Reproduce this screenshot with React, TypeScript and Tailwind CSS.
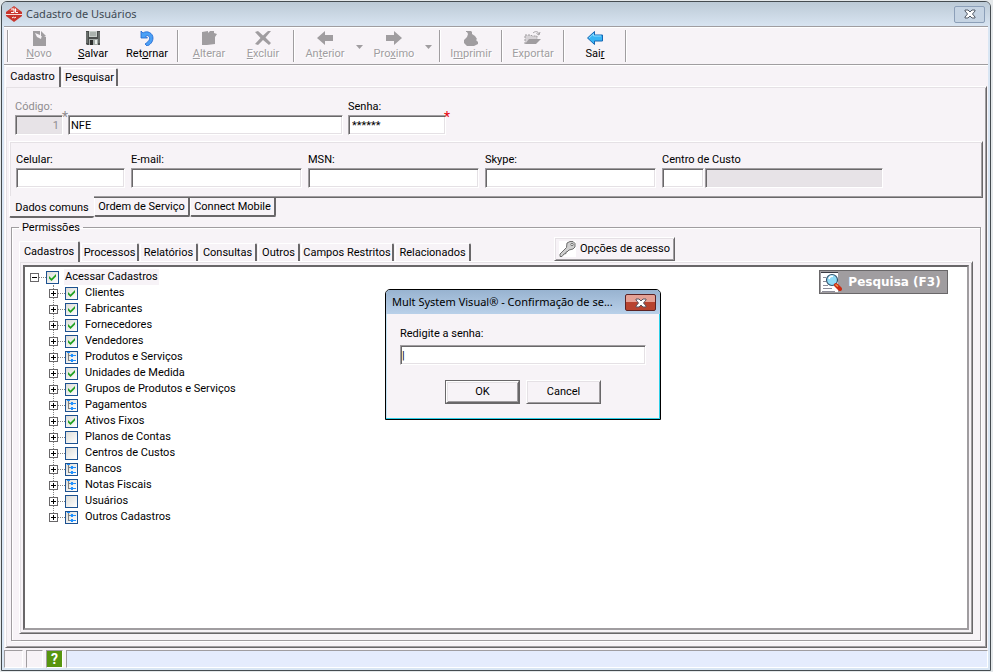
import type { ReactNode } from 'react';
import clsx from 'clsx';

type TreeState = 'on' | 'off' | 'partial';

const sunken =
  'border border-t-[#a09da0] border-l-[#a09da0] border-r-white border-b-white shadow-[inset_1px_1px_0_#696769,inset_-1px_-1px_0_#e5e1e5]';
const raised =
  'border border-t-white border-l-white border-r-[#696769] border-b-[#696769] shadow-[inset_1px_1px_0_#e5e1e5,inset_-1px_-1px_0_#a09da0]';
const statusCell = 'border border-t-[#a09da0] border-r-white border-b-white border-l-[#a09da0]';

const permissionTabs = [
  { label: 'Processos', width: 'w-[58px]' },
  { label: 'Relatórios', width: 'w-[58px]' },
  { label: 'Consultas', width: 'w-[58px]' },
  { label: 'Outros', width: 'w-[42px]' },
  { label: 'Campos Restritos', width: 'w-[93px]' },
  { label: 'Relacionados', width: 'w-[76px]' },
];

const treeItems: { label: string; state: TreeState }[] = [
  { label: 'Clientes', state: 'on' },
  { label: 'Fabricantes', state: 'on' },
  { label: 'Fornecedores', state: 'on' },
  { label: 'Vendedores', state: 'on' },
  { label: 'Produtos e Serviços', state: 'partial' },
  { label: 'Unidades de Medida', state: 'on' },
  { label: 'Grupos de Produtos e Serviços', state: 'on' },
  { label: 'Pagamentos', state: 'partial' },
  { label: 'Ativos Fixos', state: 'on' },
  { label: 'Planos de Contas', state: 'off' },
  { label: 'Centros de Custos', state: 'off' },
  { label: 'Bancos', state: 'partial' },
  { label: 'Notas Fiscais', state: 'partial' },
  { label: 'Usuários', state: 'off' },
  { label: 'Outros Cadastros', state: 'partial' },
];

const contactFields = [
  { id: 'celular', label: 'Celular:', width: 'w-[109px]' },
  { id: 'email', label: 'E-mail:', width: 'w-[171px]' },
  { id: 'msn', label: 'MSN:', width: 'w-[171px]' },
  { id: 'skype', label: 'Skype:', width: 'w-[171px]' },
];

function AppIcon() {
  return (
    <svg width="16" height="16" viewBox="0 0 16 16" aria-hidden="true">
      <path d="M8 0 L16 6 V10 L8 16 L0 10 V6 Z" fill="#c8352c" />
      <path d="M8 1 L13 5 H3 Z" fill="#e2675a" />
      <path d="M0 8 H16 V9 H0 Z" fill="#f6dcd8" />
      <path d="M5 3 H8 V6.500 H5 M9.500 2.500 V6.500 H12" fill="none" stroke="#fff" strokeWidth="1" />
      <path d="M6 12 L7.500 11 L8.500 12 L10 11" fill="none" stroke="#fff" strokeWidth="1" />
    </svg>
  );
}

function CrossIcon({ stroke }: { stroke: string }) {
  return (
    <svg width="12" height="10" viewBox="0 0 12 10" aria-hidden="true">
      <path
        d="M1 1 H4 L6 3 L8 1 H11 V2 L8.500 5 L11 8 V9 H8 L6 7 L4 9 H1 V8 L3.500 5 L1 2 Z"
        fill="#fff"
        stroke={stroke}
      />
    </svg>
  );
}

function NewIcon() {
  return (
    <svg width="16" height="16" viewBox="0 0 16 16" aria-hidden="true">
      <path d="M2 1 H9 V5 L4 3 L6 7 L10 9 L11 5 L15 7 V16 H2 Z" fill="#a09da0" />
      <path d="M10 1 L15 6 H10 Z" fill="#a09da0" />
    </svg>
  );
}

function SaveIcon() {
  return (
    <svg width="16" height="16" viewBox="0 0 16 16" aria-hidden="true">
      <path d="M1 1 H15 V15 H2 L1 14 Z" fill="#4b4e4d" />
      <rect x="4" y="1" width="8" height="6" fill="#c9cfcb" />
      <path d="M5 3 H11 M5 5 H11" stroke="#8d9590" />
      <path d="M2 2 V13 M14 2 V13" stroke="#858b88" />
      <rect x="4" y="9" width="9" height="6" fill="#a6aca9" />
      <rect x="5" y="10" width="3" height="5" fill="#2c2e2d" />
      <rect x="10" y="10" width="2" height="4" fill="#e9eeeb" />
    </svg>
  );
}

function UndoIcon() {
  return (
    <svg width="16" height="16" viewBox="0 0 16 16" aria-hidden="true">
      <path
        d="M2 1 L4 3 C8 0 14 3 14 8 C14 12 11 15 8 16 L6 14 C9 12 11 10 10.500 7.500 C10 5.500 8 5 6.500 6 L8.500 8 H2 Z"
        fill="#4ba0f6"
        stroke="#1d63cf"
        strokeWidth="0.8"
      />
    </svg>
  );
}

function EditIcon() {
  return (
    <svg width="16" height="16" viewBox="0 0 16 16" aria-hidden="true">
      <path d="M1 2 L7 1 V3 L9 1 H13 V3 L16 4 L14 7 V14 L6 15 H1 Z" fill="#a09da0" />
    </svg>
  );
}

function DeleteIcon() {
  return (
    <svg width="18" height="16" viewBox="0 0 18 16" aria-hidden="true">
      <path
        d="M1 2 L4 1 L9 5.500 L14 1 L17 1 L11.500 7.500 L17 13 L15 15 L9 10 L4 15 L1 14 L6.500 8 Z"
        fill="#a09da0"
      />
    </svg>
  );
}

function ArrowIcon({ flip }: { flip?: boolean }) {
  return (
    <svg width="18" height="16" viewBox="0 0 18 16" className={flip ? 'rotate-180' : ''} aria-hidden="true">
      <path d="M1 8 L9 1 V5 H17 V11 H9 V15 Z" fill="#a09da0" />
    </svg>
  );
}

function PrintIcon() {
  return (
    <svg width="16" height="16" viewBox="0 0 16 16" aria-hidden="true">
      <path d="M3 1 H8 L9 2 V4 L12 6 L14 9 L13 10 L15 12 V14 L11 16 H4 L1 13 V10 L4 7 L5 4 L4 2 H3 Z" fill="#a09da0" />
    </svg>
  );
}

function ExportIcon() {
  return (
    <svg width="18" height="16" viewBox="0 0 18 16" aria-hidden="true">
      <path d="M1 14 V5 H7 L8 6 H13 V9" fill="#d6d2d6" stroke="#a09da0" strokeDasharray="2 1" />
      <path d="M1 14 L5 9 H17 L12 14 Z" fill="#a09da0" />
      <path d="M9 3 C11 1 14 1 15 4 M12.500 3.500 L15 5 L16 2" fill="none" stroke="#a09da0" />
    </svg>
  );
}

function ExitIcon() {
  return (
    <svg width="18" height="16" viewBox="0 0 18 16" aria-hidden="true">
      <path d="M1.500 8 L8.500 1.500 V5 H16.500 V11 H8.500 V14.500 Z" fill="#38b5f5" stroke="#1766b4" />
      <path d="M3 8 L7.500 4 V6 H15" fill="none" stroke="#8edcff" />
    </svg>
  );
}

function KeyIcon() {
  return (
    <svg width="17" height="16" viewBox="0 0 17 16" className="bg-white" aria-hidden="true">
      <path
        d="M8 2 L11 0.500 H14 L16 2.500 V6 L14 8 L10 9 L8 11 L7 11 V12.500 L5 13 L3 15.500 H1 V13 L7.500 6.500 Z"
        fill="#cfcfcf"
        stroke="#6d6d6d"
      />
      <circle cx="13" cy="3.500" r="1.200" fill="#fff" stroke="#6d6d6d" />
    </svg>
  );
}

function SearchIcon() {
  return (
    <svg width="21" height="20" viewBox="0 0 21 20" aria-hidden="true">
      <rect width="17" height="20" fill="#fff" />
      <path d="M0 0.500 H17" stroke="#3c3c44" />
      <path d="M2 5.500 H5 M2 9.500 H5 M2 13.500 H7 M2 16.500 H11 M1 19.500 H14" stroke="#8c8c98" />
      <circle cx="11" cy="8" r="5.500" fill="#8fdcf7" stroke="#35536d" strokeWidth="1.200" />
      <path d="M8 7 C8.500 5 10 4 12 4.500" fill="none" stroke="#fff" strokeWidth="1.500" />
      <path d="M15 13 L19 17" stroke="#c92b12" strokeWidth="4" strokeLinecap="round" />
      <path d="M14.500 12.500 L17 14.500" stroke="#f49a4e" strokeWidth="1.500" />
    </svg>
  );
}

function Separator() {
  return <div className="mx-[3px] h-8 w-[2px] border-r border-l border-l-[#a09da0] border-r-white" />;
}

function ToolButton({ icon, disabled, children }: { icon: ReactNode; disabled?: boolean; children: ReactNode }) {
  return (
    <button
      type="button"
      disabled={disabled}
      className={clsx(
        'flex w-[54px] flex-col items-center whitespace-nowrap',
        disabled ? 'text-[#a09da0] [text-shadow:1px_1px_0_#fff]' : 'text-black',
      )}
    >
      {icon}
      <span className="leading-4">{children}</span>
    </button>
  );
}

function DropArrow({ label }: { label: string }) {
  return (
    <button type="button" disabled aria-label={label} className="flex w-[15px] justify-center self-center">
      <svg width="7" height="4" viewBox="0 0 7 4" aria-hidden="true">
        <path d="M0 0 H7 L3.500 4 Z" fill="#a09da0" />
      </svg>
    </button>
  );
}

function Tab({ active, width, children }: { active?: boolean; width: string; children: ReactNode }) {
  return (
    <button
      type="button"
      role="tab"
      aria-selected={!!active}
      className={clsx(
        'relative flex items-center justify-center rounded-t-[2px] border-t border-r-2 border-l border-t-white border-r-[#696769] border-l-white whitespace-nowrap',
        active ? '-mb-px h-[21px] bg-[#f7f3f7]' : 'h-[18px]',
        width,
      )}
    >
      {children}
    </button>
  );
}

function BottomTab({ active, width, children }: { active?: boolean; width: string; children: ReactNode }) {
  return (
    <button
      type="button"
      role="tab"
      aria-selected={!!active}
      className={clsx(
        'relative flex items-center justify-center rounded-b-[2px] border-b-2 border-l border-b-[#696769] border-l-white whitespace-nowrap',
        active ? '-mt-[2px] h-[22px] bg-[#f7f3f7] pt-1' : 'h-[19px] border-r-2 border-r-[#696769]',
        width,
      )}
    >
      {children}
    </button>
  );
}

function Expander({ open }: { open?: boolean }) {
  return (
    <svg width="9" height="9" viewBox="0 0 9 9" className="relative shrink-0" shapeRendering="crispEdges" aria-hidden="true">
      <rect x="0.5" y="0.5" width="8" height="8" fill="#fff" stroke="#696769" />
      <path d={open ? 'M2 4.500 H7' : 'M2 4.500 H7 M4.500 2 V7'} stroke="#000" />
    </svg>
  );
}

function TreeNode({ label, state, root }: { label: string; state: TreeState; root?: boolean }) {
  return (
    <div className="flex h-4 items-center">
      <Expander open={root} />
      <span className="w-[7px] border-t border-dotted border-[#808080]" />
      <label className="flex items-center">
        <span className="grid size-[13px]">
          <input
            type="checkbox"
            defaultChecked={state === 'on'}
            className="col-start-1 row-start-1 size-[13px] appearance-none border border-[#1c5190] bg-linear-to-br from-[#dcdcd7] to-white"
          />
          <svg
            width="13"
            height="13"
            viewBox="0 0 13 13"
            className="pointer-events-none relative col-start-1 row-start-1"
            aria-hidden="true"
          >
            {state === 'on' && <path d="M3 5 L5.500 7.500 L10 3 V5.500 L5.500 10 L3 7.500 Z" fill="#21a121" />}
            {state === 'partial' && (
              <g shapeRendering="crispEdges">
                <path d="M3.500 2 V9.500 H6 M3.500 4.500 H6" fill="none" stroke="#808080" />
                <path d="M2 1.500 H5 M5 4.500 H11 M5 9.500 H11" stroke="#1e90ff" />
                <path d="M7 3 V6 M7 8 V11" stroke="#1e90ff" strokeWidth="2" />
              </g>
            )}
          </svg>
        </span>
        <span className={clsx('leading-4', root ? 'ml-[5px] bg-[#f7f3f7] px-px' : 'ml-[7px]')}>{label}</span>
      </label>
    </div>
  );
}

function PasswordDialog() {
  return (
    <div
      role="dialog"
      aria-labelledby="dialog-title"
      className="absolute top-[289px] left-[385px] w-[276px] rounded-t-[5px] border border-black bg-[#f7f3f7] shadow-[inset_-1px_-1px_0_#30cfe8,inset_1px_0_0_#c5e4f5]"
    >
      <div className="flex h-6 items-start justify-between rounded-t-[4px] bg-linear-to-b from-[#98b3d0] to-[#b9d0e9] pr-1 pl-[6px]">
        <h2
          id="dialog-title"
          className="font-['Noto_Sans',sans-serif] text-[11px] leading-6 whitespace-nowrap text-black"
        >
          Mult System Visual® - Confirmação de se...
        </h2>
        <button
          type="button"
          aria-label="Fechar"
          className="mt-1 flex h-[17px] w-[31px] shrink-0 items-center justify-center rounded-[2px] border border-[#5c2324] bg-linear-to-b from-[#e5a195] from-45% to-[#b8432f] to-50%"
        >
          <CrossIcon stroke="#5a5560" />
        </button>
      </div>
      <div className="px-[14px] pt-[10px] pb-[15px]">
        <label htmlFor="redigite" className="block pb-px leading-5">
          Redigite a senha:
        </label>
        <input id="redigite" type="text" defaultValue="|" className={clsx('h-5 w-full bg-white px-px', sunken)} />
        <div className="mt-[15px] flex justify-center gap-[6px]">
          <button type="button" className="h-6 w-[75px] border border-[#696769]">
            <span className={clsx('flex h-full items-center justify-center', raised)}>OK</span>
          </button>
          <button type="button" className={clsx('h-6 w-[75px]', raised)}>
            Cancel
          </button>
        </div>
      </div>
    </div>
  );
}

export default function App() {
  return (
    <div className="relative flex h-screen min-h-[600px] flex-col bg-[#e4e8ea] pt-px pr-[2px] pb-px pl-px font-[Roboto,Arial,sans-serif] text-[11px] leading-4 text-black">
      <div className="flex grow flex-col rounded-t-[6px] border border-[#454c50] bg-[#d9e6f4] pr-[2px] pb-[2px] pl-[2px]">
        <header className="-mx-[2px] flex h-6 shrink-0 items-center justify-between rounded-t-[5px] bg-linear-to-b from-[#bccad6] to-[#d8e4f1] pr-[5px] pl-1">
          <div className="flex items-center gap-1">
            <AppIcon />
            <h1 className="font-['Noto_Sans',sans-serif] text-[11px] text-[#3e4a54]">Cadastro de Usuários</h1>
          </div>
          <button
            type="button"
            aria-label="Fechar janela"
            className="flex h-[17px] w-[31px] items-center justify-center rounded-[2px] border border-[#8c9fb8] bg-[#c6d4e3]"
          >
            <CrossIcon stroke="#525a66" />
          </button>
        </header>

        <main className="flex grow flex-col bg-[#f7f3f7]">
          <div className="flex h-[39px] shrink-0 items-start border-t border-b border-[#a09da0] pt-[3px] shadow-[inset_0_1px_0_#fff,0_1px_0_#fff]">
            <Separator />
            <ToolButton disabled icon={<NewIcon />}><u>N</u>ovo</ToolButton>
            <ToolButton icon={<SaveIcon />}><u>S</u>alvar</ToolButton>
            <ToolButton icon={<UndoIcon />}>Ret<u>o</u>rnar</ToolButton>
            <Separator />
            <ToolButton disabled icon={<EditIcon />}><u>A</u>lterar</ToolButton>
            <ToolButton disabled icon={<DeleteIcon />}><u>E</u>xcluir</ToolButton>
            <Separator />
            <ToolButton disabled icon={<ArrowIcon />}>An<u>t</u>erior</ToolButton>
            <DropArrow label="Opções de anterior" />
            <ToolButton disabled icon={<ArrowIcon flip />}>Pro<u>x</u>imo</ToolButton>
            <DropArrow label="Opções de próximo" />
            <Separator />
            <ToolButton disabled icon={<PrintIcon />}>I<u>m</u>primir</ToolButton>
            <Separator />
            <ToolButton disabled icon={<ExportIcon />}>Exportar</ToolButton>
            <Separator />
            <ToolButton icon={<ExitIcon />}>Sai<u>r</u></ToolButton>
            <Separator />
          </div>

          <div role="tablist" className="flex h-[21px] shrink-0 items-end gap-px pl-px">
            <Tab active width="w-[56px]">Cadastro</Tab>
            <Tab width="w-[56px]">Pesquisar</Tab>
          </div>

          <section className={clsx('mx-px flex grow flex-col px-[3px] pt-3 pb-[6px]', raised)}>
            <div className="flex pl-[6px]">
              <div className="relative w-[53px] text-[#8f8c8f]">
                <label htmlFor="codigo" className="block">Código:</label>
                <input
                  id="codigo"
                  disabled
                  defaultValue="1"
                  className={clsx('h-5 w-12 bg-[#e7e3e7] px-[3px] text-right', sunken)}
                />
                <span className="absolute top-[10px] right-0 text-sm leading-4">*</span>
              </div>
              <input aria-label="Nome" defaultValue="NFE" className={clsx('mt-4 h-5 w-[275px] bg-white px-[2px]', sunken)} />
              <div className="relative ml-[5px]">
                <label htmlFor="senha" className="block">Senha:</label>
                <input
                  id="senha"
                  defaultValue="******"
                  className={clsx('h-5 w-[98px] bg-white px-[3px]', sunken)}
                />
                <span className="absolute top-[10px] -right-1 text-sm leading-4 text-red-600">*</span>
              </div>
            </div>

            <div className={clsx('mt-[6px] flex gap-[6px] px-[6px] pt-[10px] pb-[9px]', raised)}>
              {contactFields.map((field) => (
                <div key={field.id} className={field.width}>
                  <label htmlFor={field.id} className="block">{field.label}</label>
                  <input id={field.id} className={clsx('h-5 w-full bg-white px-[3px]', sunken)} />
                </div>
              ))}
              <div>
                <label htmlFor="centro" className="block">Centro de Custo</label>
                <div className="flex gap-px">
                  <input id="centro" className={clsx('h-5 w-[42px] bg-white px-[3px]', sunken)} />
                  <input
                    aria-label="Descrição do centro de custo"
                    disabled
                    className={clsx('h-5 w-[178px] bg-[#e7e3e7] px-[3px]', sunken)}
                  />
                </div>
              </div>
            </div>
            <div role="tablist" className="flex h-5 shrink-0">
              <BottomTab active width="w-[85px]">Dados comuns</BottomTab>
              <BottomTab width="w-[96px]">Ordem de Serviço</BottomTab>
              <BottomTab width="w-[86px]">Connect Mobile</BottomTab>
            </div>

            <fieldset className="mx-[2px] flex grow flex-col border border-[#a09da0] px-[7px] pb-[6px] shadow-[1px_1px_0_#fff,inset_1px_1px_0_#fff]">
              <legend className="px-[3px] pt-[2px] leading-4">Permissões</legend>
              <div className="flex h-[25px] items-end">
                <div role="tablist" className="flex items-end gap-px">
                  <Tab active width="w-[61px]">Cadastros</Tab>
                  {permissionTabs.map((tab) => (
                    <Tab key={tab.label} width={tab.width}>{tab.label}</Tab>
                  ))}
                </div>
                <button
                  type="button"
                  className={clsx('ml-[83px] flex h-6 w-[121px] items-center justify-center gap-1 whitespace-nowrap', raised)}
                >
                  <KeyIcon />
                  Opções de acesso
                </button>
              </div>

              <div className={clsx('flex grow flex-col p-[3px]', raised)}>
                <div className="flex grow items-start justify-between border-2 border-t-[#696769] border-r-[#a09da0] border-b-[#a09da0] border-l-[#696769] bg-white pt-[2px] pr-[19px] pl-[5px]">
                  <ul>
                    <li>
                      <TreeNode root label="Acessar Cadastros" state="on" />
                      <ul className="relative pl-[19px] before:absolute before:top-0 before:bottom-2 before:left-[23px] before:border-l before:border-dotted before:border-[#808080]">
                        {treeItems.map((item) => (
                          <li key={item.label}>
                            <TreeNode label={item.label} state={item.state} />
                          </li>
                        ))}
                      </ul>
                    </li>
                  </ul>
                  <button
                    type="button"
                    className="mt-px flex h-6 w-[129px] items-center border border-[#696769] bg-[#a09da0] pl-px font-['DejaVu_Sans',sans-serif] text-xs font-bold whitespace-nowrap text-white"
                  >
                    <SearchIcon />
                    <span className="grow text-center">Pesquisa (F3)</span>
                  </button>
                </div>
              </div>
            </fieldset>
          </section>

          <footer className="mt-[2px] flex h-[18px] shrink-0 items-stretch gap-[3px]">
            <div className={clsx('w-[19px]', statusCell)} />
            <div className={clsx('w-[17px]', statusCell)} />
            <button
              type="button"
              aria-label="Ajuda"
              className={clsx('w-[17px] bg-[#57950f] text-sm leading-4 font-bold text-white', statusCell)}
            >
              ?
            </button>
            <div className={clsx('grow bg-[#e5ecfd]', statusCell)} />
          </footer>
        </main>
      </div>
      <PasswordDialog />
    </div>
  );
}
